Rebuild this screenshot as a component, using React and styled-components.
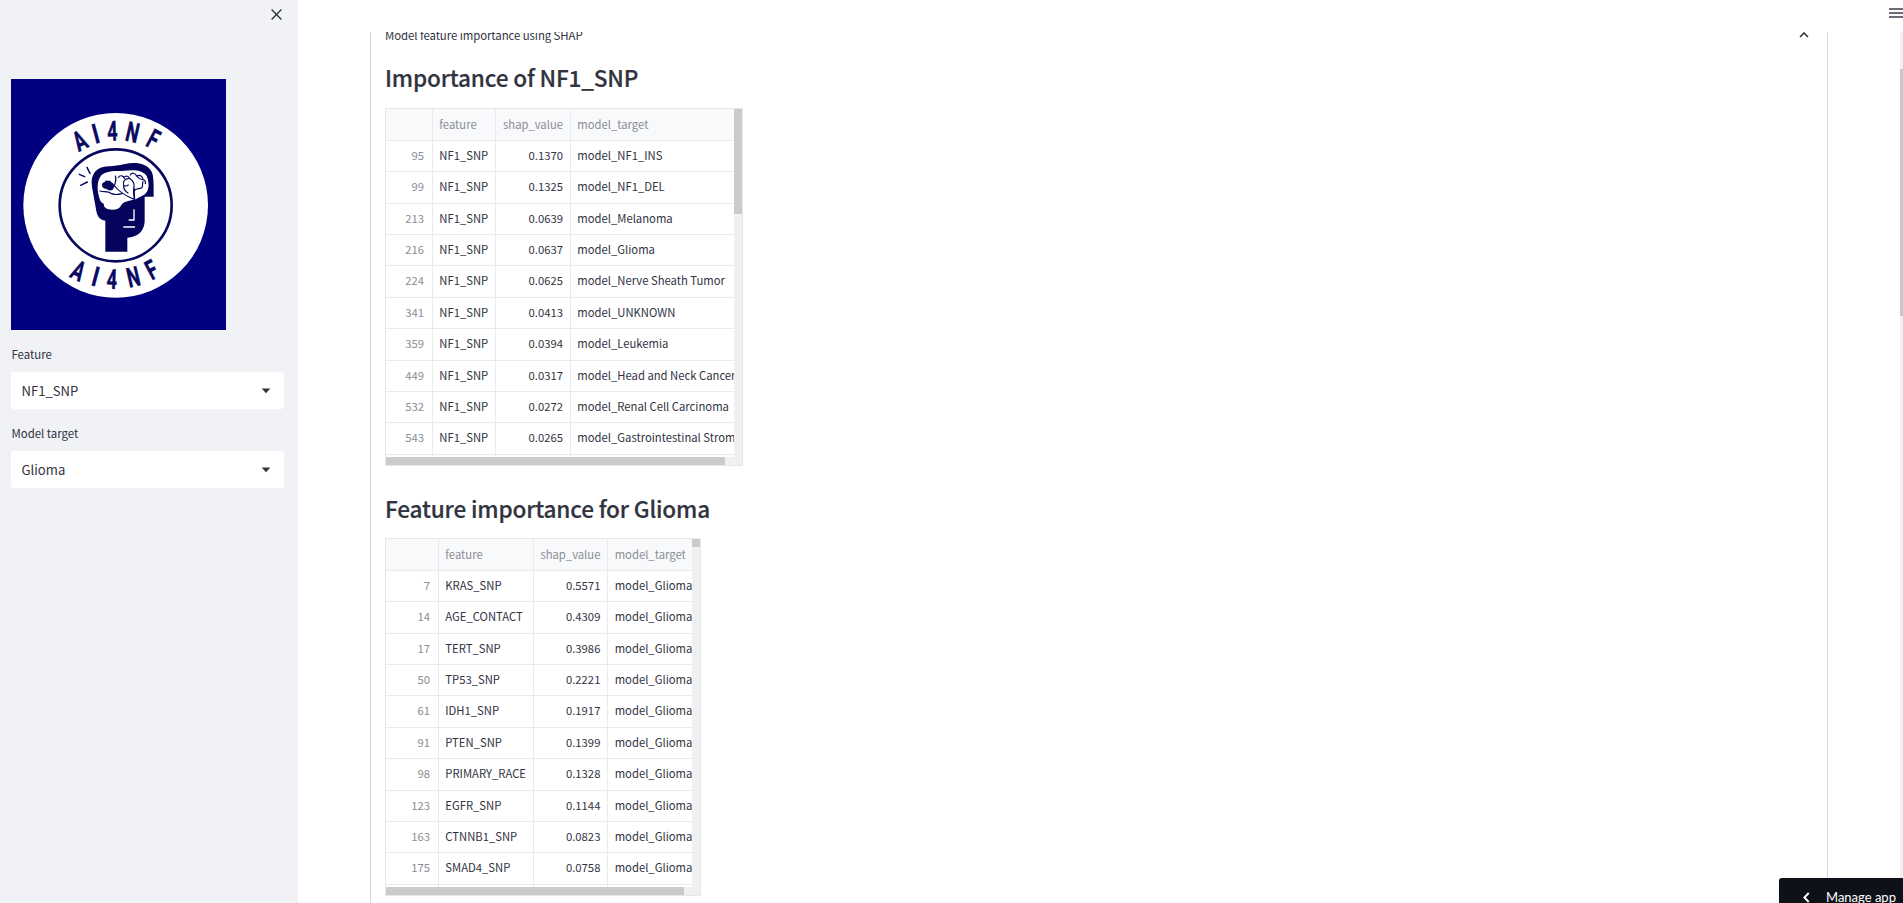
import React from "react";
import styled, { createGlobalStyle } from "styled-components";

const GlobalStyle = createGlobalStyle`
  * { box-sizing: border-box; }
  html, body, #root { height: 100%; }
  body {
    margin: 0;
    overflow: hidden;
    background: #fff;
    color: #31333f;
    font-family: "Noto Sans CJK SC", "Open Sans", sans-serif;
  }
`;

const Page = styled.div`
  display: flex;
  height: 903px;
  overflow: hidden;
`;

const Sidebar = styled.aside`
  flex: 0 0 298px;
  padding: 0 14px 0 11px;
  background: #f0f2f6;
`;

const SidebarTop = styled.div`
  display: flex;
  justify-content: flex-end;
  height: 79px;
  padding: 8.5px 2.5px 0 0;
`;

const Logo = styled.svg`
  display: block;
  width: 215px;
  height: 251px;
`;

const LogoLetter = styled.text`
  font-family: Roboto, sans-serif;
  font-size: 82px;
  font-weight: 700;
  fill: #08085f;
  stroke: #08085f;
  stroke-width: 1.5px;
  text-anchor: middle;
`;

const Field = styled.div`
  height: 79px;
  padding-top: 15px;
`;

const FieldLabel = styled.div`
  height: 18px;
  margin-bottom: 9px;
  padding-left: 0.5px;
  font-size: 11.4px;
  line-height: 18px;
`;

const Select = styled.div`
  display: flex;
  align-items: center;
  justify-content: space-between;
  height: 37px;
  padding: 1px 13px 0 10.5px;
  border-radius: 3px;
  background: #fff;
  font-size: 13.1px;
  line-height: 20px;
`;

const Main = styled.main`
  flex: 1;
  display: flex;
  flex-direction: column;
  min-width: 0;
`;

const Header = styled.header`
  flex: 0 0 32px;
  display: flex;
  justify-content: flex-end;
  padding-top: 8px;
`;

const ScrollArea = styled.div`
  flex: 1;
  display: flex;
  min-height: 0;
  overflow: hidden;
`;

const Content = styled.div`
  flex: 1;
  padding: 0 72px;
`;

const PageTrack = styled.div`
  flex: 0 0 3px;
  padding-top: 37px;
  background: #f0f0f0;
`;

const PageThumb = styled.div`
  height: 247px;
  background: #c8c8c8;
`;

const Expander = styled.section`
  height: 900px;
  padding: 0 18px 0 14px;
  border: solid #d5d6d8;
  border-width: 0 1px;
`;

const Summary = styled.div`
  display: flex;
  align-items: center;
  justify-content: space-between;
  height: 26px;
  margin: -10px 0 14px;
  font-size: 11.4px;
  line-height: 26px;
  letter-spacing: -0.07px;
`;

const Heading = styled.h3`
  height: 30px;
  margin: ${(p) => p.$top}px 0 ${(p) => p.$bottom}px;
  font-size: 22.6px;
  font-weight: 500;
  line-height: 30px;
  letter-spacing: -0.17px;
  white-space: nowrap;
  -webkit-text-stroke: 0.2px currentColor;
`;

const Frame = styled.div`
  display: grid;
  grid-template-columns: 1fr 8px;
  grid-template-rows: 1fr 8px;
  width: ${(p) => p.$width}px;
  height: 358px;
  border: 1px solid #e6e7ea;
  background: #f0f0f0;
`;

const Viewport = styled.div`
  overflow: hidden;
  background: #fff;
`;

const VThumb = styled.div`
  height: ${(p) => p.$size}px;
  background: #cbcbcb;
`;

const HThumb = styled.div`
  width: ${(p) => p.$size}px;
  background: #cbcbcb;
`;

const Row = styled.div`
  display: grid;
  grid-template-columns: ${(p) => p.$columns};
  height: ${(p) => (p.$head ? 32 : 31.36)}px;
  line-height: ${(p) => (p.$head ? 30 : 29)}px;
  background: ${(p) => (p.$head ? "#f8f9fb" : "#fff")};
`;

const Cell = styled.div`
  overflow: hidden;
  padding: 0 ${(p) => p.$padRight ?? 7}px 0 6.3px;
  border: solid #e9eaed;
  border-width: 0 ${(p) => (p.$last ? 0 : 1)}px 1px 0;
  color: ${(p) => (p.$muted ? "#8b8d95" : "#31333f")};
  font-size: 11.28px;
  text-align: ${(p) => (p.$right ? "right" : "left")};
  white-space: nowrap;
`;

const ManageApp = styled.div`
  position: fixed;
  right: 0;
  bottom: 0;
  display: flex;
  width: 124px;
  height: 25px;
  padding: 7px 0 0 24px;
  gap: 16px;
  overflow: hidden;
  border-radius: 3px 0 0 0;
  background: #0e1117;
  color: #fff;
  font-family: Lato, sans-serif;
  font-size: 13px;
  line-height: 24px;
  white-space: nowrap;
`;

const Chevron = styled.svg`
  flex: none;
  fill: none;
  stroke: currentColor;
  stroke-width: ${(p) => p.$weight || 1.6};
`;

const BackChevron = styled(Chevron)`
  margin-top: 7px;
`;

const LETTERS = [
  ["A", 240, 213, -27],
  ["I", 287, 192, -15],
  ["4", 337, 184, -2],
  ["N", 398, 188, 13],
  ["F", 460, 208, 28],
  ["A", 235, 603, 27],
  ["I", 287, 620, 15],
  ["4", 336, 628, 3],
  ["N", 400, 622, -13],
  ["F", 455, 600, -28],
];

function BrandLogo() {
  return (
    <Logo viewBox="33 27 645 753" preserveAspectRatio="none">
      <rect x="33" y="27" width="645" height="753" fill="#000080" />
      <circle cx="347" cy="406" r="277" fill="#fff" />
      <circle cx="347" cy="406" r="168" fill="none" stroke="#08085f" strokeWidth="8" />
      {LETTERS.map(([ch, x, y, angle], i) => (
        <LogoLetter
          key={i}
          transform={`translate(${x} ${y}) rotate(${angle}) scale(${ch === "I" ? 0.75 : 0.66} 1)`}
          y="28"
        >
          {ch}
        </LogoLetter>
      ))}
      <path
        fill="#04045c"
        d="M316 545V452C298 450 291 438 288 418L276 350C270 312 290 290 325 289C345 288 355 286 375 282C405 276 440 278 455 305C462 320 461 350 461 380H434V455C432 485 412 500 382 503V545Z"
      />
      <path
        fill="#fff"
        d="M297 380C290 355 292 330 304 316C318 302 345 303 365 303C400 300 425 298 440 318C452 345 445 372 425 378L404 389C385 392 372 394 364 405C358 418 343 422 325 418C312 414 310 405 312 402C303 398 299 390 297 380Z"
      />
      <g fill="none" stroke="#08085f" strokeWidth="3.6" strokeLinecap="round">
        <path d="M300 363C310 368 323 361 335 371C346 376 358 373 366 371M341 345C355 364 378 378 404 389M346 318C351 329 345 338 343 349M355 322C360 314 371 317 373 325M371 323C377 316 387 318 388 325C377 324 367 334 371 345C374 350 380 348 385 345M371 345C370 358 375 364 384 369M388 325C397 331 404 340 402 350L404 389M391 315C395 307 406 308 410 318C421 312 431 322 428 329M410 318C415 323 418 329 428 329C435 330 437 335 436 341M404 361C409 353 419 358 425 353C430 348 426 341 429 335M404 389C401 377 398 367 402 350" />
        <path d="M261 292L270 310M238 313L254 320M242 346L262 336" strokeWidth="4.5" />
      </g>
      <path
        fill="#08085f"
        d="M306 343C309 336 316 338 317 331C324 335 330 329 334 337C344 340 344 353 338 359C331 363 324 361 319 356C310 358 305 350 306 343Z"
      />
      <path d="M402 418V450H386M370 471H405" fill="none" stroke="#fff" strokeWidth="4" />
    </Logo>
  );
}

function Caret() {
  return (
    <svg width="10" height="6" viewBox="0 0 10 6">
      <path d="M.7 .6H9.3L5 5.2Z" fill="#31333f" />
    </svg>
  );
}

const IMPORTANCE_ROWS = [
  ["95", "NF1_SNP", "0.1370", "model_NF1_INS"],
  ["99", "NF1_SNP", "0.1325", "model_NF1_DEL"],
  ["213", "NF1_SNP", "0.0639", "model_Melanoma"],
  ["216", "NF1_SNP", "0.0637", "model_Glioma"],
  ["224", "NF1_SNP", "0.0625", "model_Nerve Sheath Tumor"],
  ["341", "NF1_SNP", "0.0413", "model_UNKNOWN"],
  ["359", "NF1_SNP", "0.0394", "model_Leukemia"],
  ["449", "NF1_SNP", "0.0317", "model_Head and Neck Cancer"],
  ["532", "NF1_SNP", "0.0272", "model_Renal Cell Carcinoma"],
  ["543", "NF1_SNP", "0.0265", "model_Gastrointestinal Strom"],
];

const GLIOMA_ROWS = [
  ["7", "KRAS_SNP", "0.5571"],
  ["14", "AGE_CONTACT", "0.4309"],
  ["17", "TERT_SNP", "0.3986"],
  ["50", "TP53_SNP", "0.2221"],
  ["61", "IDH1_SNP", "0.1917"],
  ["91", "PTEN_SNP", "0.1399"],
  ["98", "PRIMARY_RACE", "0.1328"],
  ["123", "EGFR_SNP", "0.1144"],
  ["163", "CTNNB1_SNP", "0.0823"],
  ["175", "SMAD4_SNP", "0.0758"],
].map((row) => [...row, "model_Glioma"]);

function DataTable({ width, columns, rows, vThumb, hThumb }) {
  const lines = [["", "feature", "shap_value", "model_target"], ...rows, ["", "", "", ""]];
  return (
    <Frame $width={width}>
      <Viewport>
        {lines.map(([index, feature, value, target], i) => (
          <Row key={i} $columns={columns} $head={i === 0}>
            <Cell $muted $right $padRight={8}>{index}</Cell>
            <Cell $muted={i === 0}>{feature}</Cell>
            <Cell $muted={i === 0} $right>{value}</Cell>
            <Cell $muted={i === 0} $last $padRight={0}>{target}</Cell>
          </Row>
        ))}
      </Viewport>
      <VThumb $size={vThumb} />
      <HThumb $size={hThumb} />
    </Frame>
  );
}

export default function App() {
  return (
    <Page>
      <GlobalStyle />
      <Sidebar>
        <SidebarTop>
          <svg width="11" height="11" viewBox="0 0 11 11">
            <path d="M.6 .6L10.4 10.4M10.4 .6L.6 10.4" stroke="#31333f" strokeWidth="1.4" />
          </svg>
        </SidebarTop>
        <BrandLogo />
        <Field>
          <FieldLabel>Feature</FieldLabel>
          <Select>
            <span>NF1_SNP</span>
            <Caret />
          </Select>
        </Field>
        <Field>
          <FieldLabel>Model target</FieldLabel>
          <Select>
            <span>Glioma</span>
            <Caret />
          </Select>
        </Field>
      </Sidebar>
      <Main>
        <Header>
          <svg width="14" height="10" viewBox="0 0 14 10">
            <path d="M0 1H14M0 5H14M0 9H14" stroke="#3d3f4b" strokeWidth="1.6" />
          </svg>
        </Header>
        <ScrollArea>
          <Content>
            <Expander>
              <Summary>
                <span>Model feature importance using SHAP</span>
                <Chevron width="10" height="6" viewBox="0 0 10 6">
                  <path d="M1 5L5 1L9 5" />
                </Chevron>
              </Summary>
              <Heading $top={15} $bottom={15}>Importance of NF1_SNP</Heading>
              <DataTable
                width={358}
                columns="47px 63px 75px 1fr"
                rows={IMPORTANCE_ROWS}
                vThumb={105}
                hThumb={339}
              />
              <Heading $top={28} $bottom={14}>Feature importance for Glioma</Heading>
              <DataTable
                width={316}
                columns="53px 95px 74.4px 1fr"
                rows={GLIOMA_ROWS}
                vThumb={8}
                hThumb={298}
              />
            </Expander>
          </Content>
          <PageTrack>
            <PageThumb />
          </PageTrack>
        </ScrollArea>
      </Main>
      <ManageApp>
        <BackChevron width="7" height="11" viewBox="0 0 7 11" $weight={1.9}>
          <path d="M5.7 1L1.4 5.5L5.7 10" />
        </BackChevron>
        <span>Manage app</span>
      </ManageApp>
    </Page>
  );
}
